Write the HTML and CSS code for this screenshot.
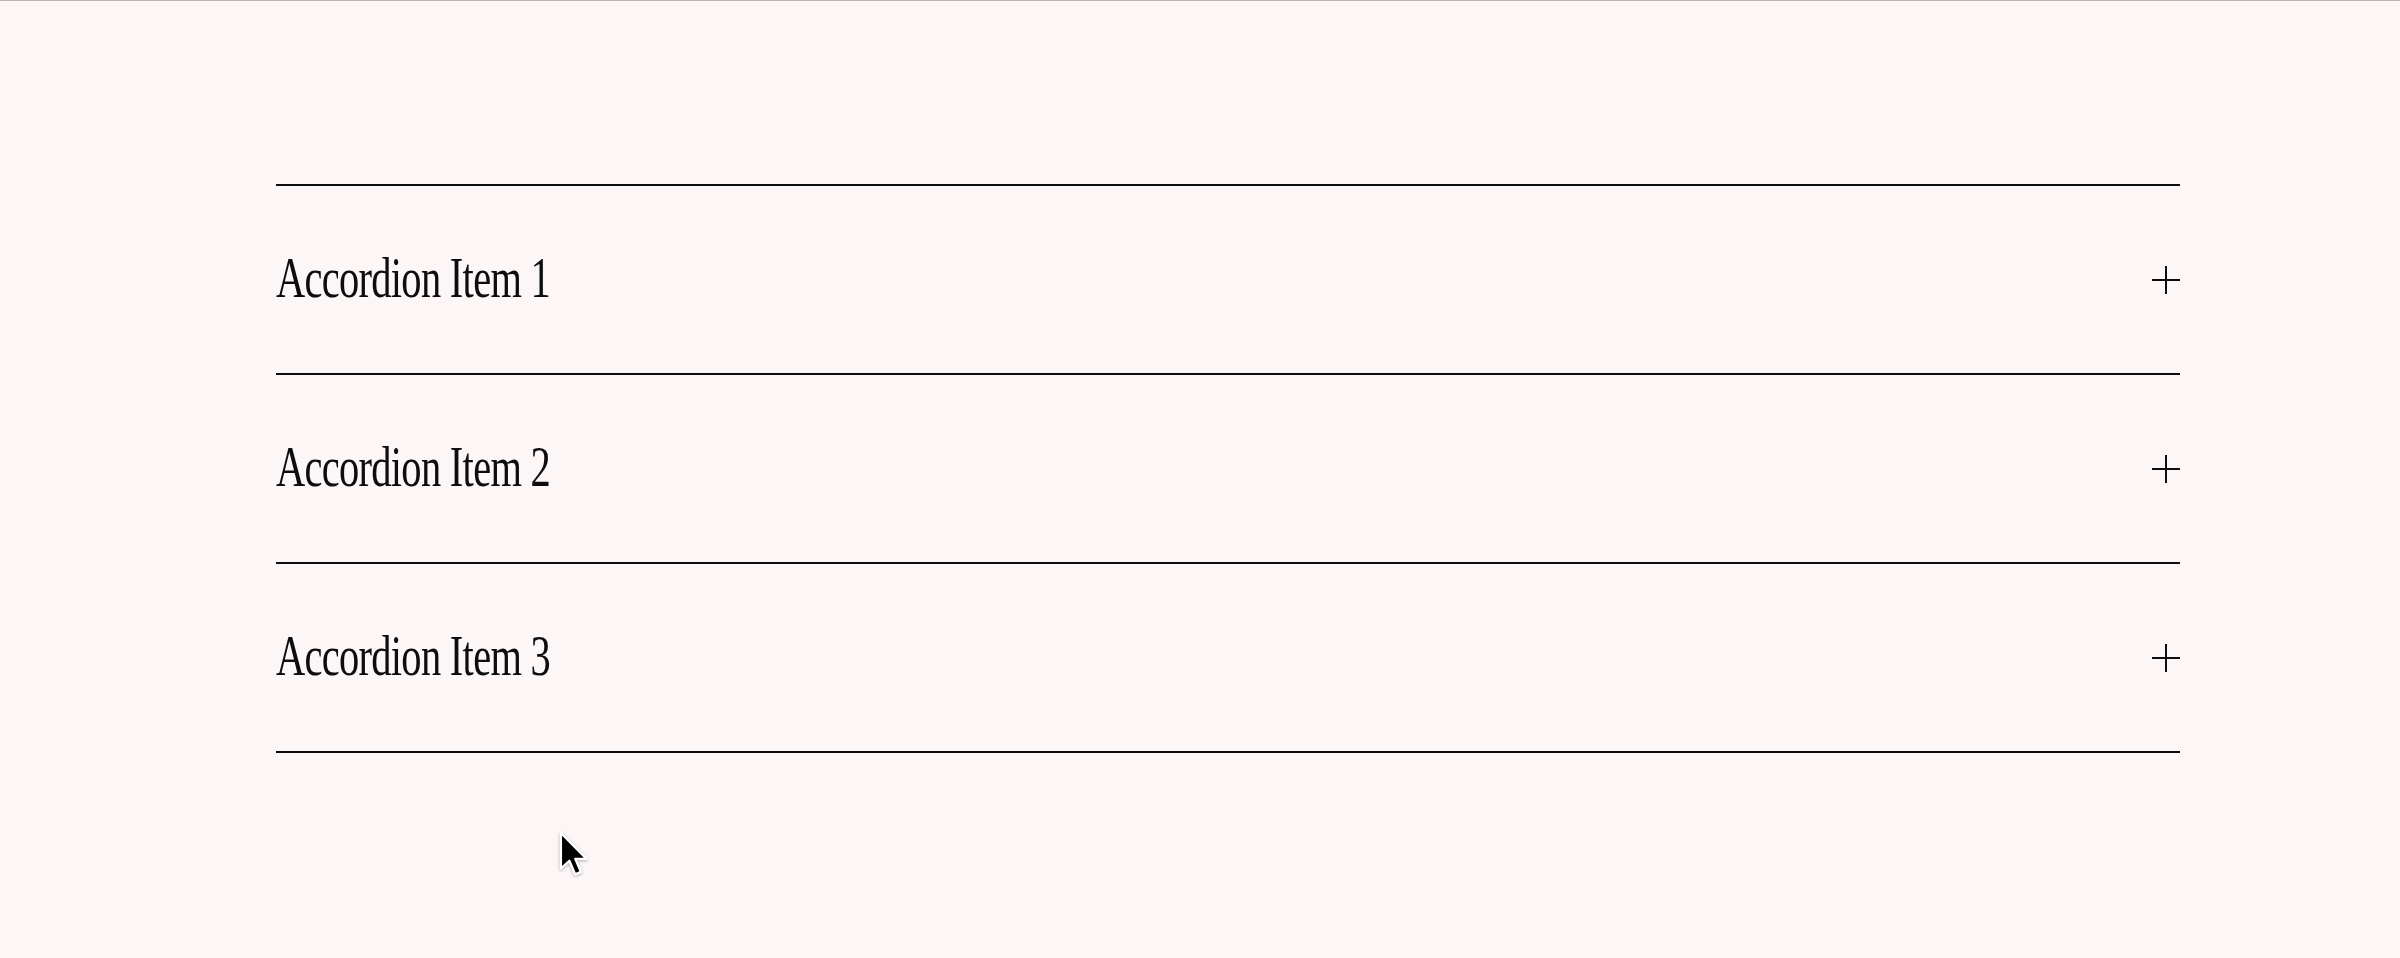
FILE: index.html
```html
<!DOCTYPE html>
<html lang="en">
<head>
  <meta charset="UTF-8">
  <title>Accordion</title>
  <link rel="stylesheet" href="styles.css">
</head>
<body>

  <div class="accordion">
    <button class="accordion-item" type="button">
      <span class="accordion-title">Accordion Item 1</span>
      <span class="accordion-icon"></span>
    </button>
    <button class="accordion-item" type="button">
      <span class="accordion-title">Accordion Item 2</span>
      <span class="accordion-icon"></span>
    </button>
    <button class="accordion-item" type="button">
      <span class="accordion-title">Accordion Item 3</span>
      <span class="accordion-icon"></span>
    </button>
  </div>

  <!-- mouse pointer captured in the screenshot -->
  <svg class="pointer" width="38" height="49" viewBox="0 0 20 26">
    <path d="M2 1 L2 20 L6.5 15.8 L9.6 23 L12.6 21.7 L9.6 14.8 L15.6 14.8 Z" fill="#000" stroke="#fff" stroke-width="1.2" stroke-linejoin="round"/>
  </svg>

  <script>
    document.querySelectorAll('.accordion-item').forEach(function (item) {
      item.addEventListener('click', function () {
        item.classList.toggle('open');
      });
    });
  </script>

</body>
</html>
```

FILE: styles.css
```css
body {
  margin: 0;
  border-top: 1px solid #bab3b4;
  background-color: #fcf6f7;
  min-height: 957px;
  font-family: "Liberation Serif", "Times New Roman", serif;
  position: relative;
}

.accordion {
  width: 1904px;
  margin-left: 276px;
  padding-top: 183px;
}

.accordion-item {
  display: flex;
  justify-content: space-between;
  align-items: center;
  width: 100%;
  height: 189px;
  padding: 0;
  border: none;
  border-top: 2px solid #0d0d0d;
  background: none;
  cursor: pointer;
  font: inherit;
  color: #0d0d0d;
}

.accordion-item:last-child {
  border-bottom: 2px solid #0d0d0d;
  height: 191px;
}

.accordion-title {
  display: inline-block;
  font-size: 57px;
  line-height: 1;
  letter-spacing: -1px;
  white-space: nowrap;
  transform: scaleX(0.71);
  transform-origin: left center;
  padding-bottom: 4px;
}

.accordion-icon {
  position: relative;
  width: 28px;
  height: 28px;
}

.accordion-icon::before,
.accordion-icon::after {
  content: "";
  position: absolute;
  background: #0d0d0d;
}

.accordion-icon::before {
  left: 0;
  top: 13px;
  width: 28px;
  height: 2px;
}

.accordion-icon::after {
  left: 13px;
  top: 0;
  width: 2px;
  height: 28px;
}

.accordion-item.open .accordion-icon::after {
  display: none;
}

.pointer {
  position: absolute;
  left: 557px;
  top: 830px;
  filter: drop-shadow(0 1px 1.5px rgba(0,0,0,0.3));
}
```
